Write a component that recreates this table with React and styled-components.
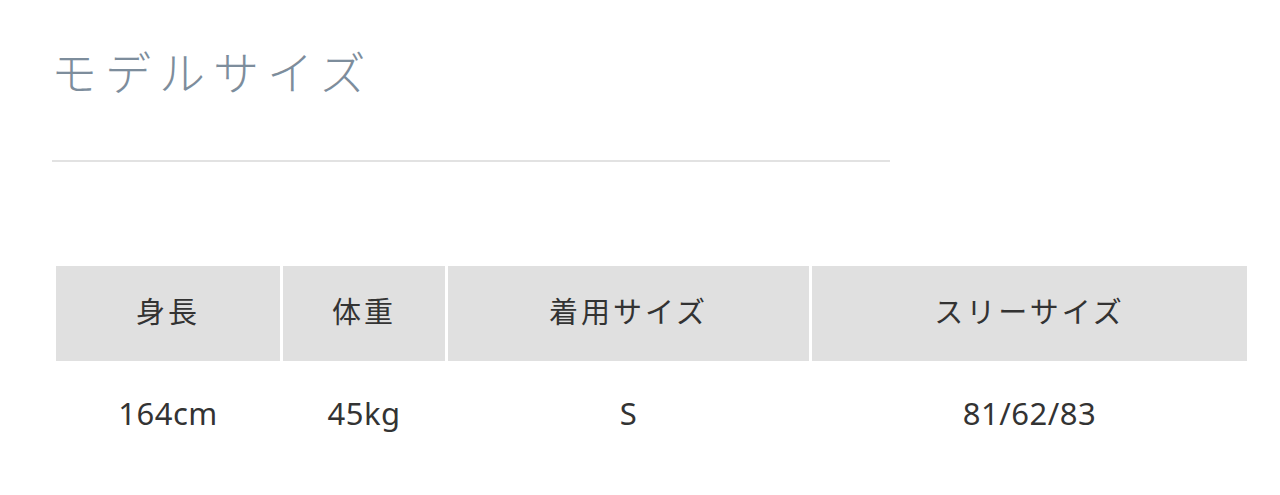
import React from "react";
import styled, { createGlobalStyle } from "styled-components";

const GlobalStyle = createGlobalStyle`
    body {
        margin: 0;
        background: #fff;
        font-family: "Noto Sans CJK JP", "Noto Sans", sans-serif;
    }
`

const headers = ["身長", "体重", "着用サイズ", "スリーサイズ"]
const values = ["164cm", "45kg", "S", "81/62/83"]

const App = () => {
    return (
        <StyledPage>
            <GlobalStyle />
            <StyledTitle>モデルサイズ</StyledTitle>
            <StyledRule />
            <StyledTable>
                {headers.map((h) => (
                    <StyledHead key={h}>{h}</StyledHead>
                ))}
                {values.map((v) => (
                    <StyledCell key={v}>{v}</StyledCell>
                ))}
            </StyledTable>
        </StyledPage>
    )
}

const StyledPage = styled.div `
    padding: 47px 0 0 51px;
    height: 495px;
    box-sizing: border-box;
`

const StyledTitle = styled.h2 `
    margin: 0;
    font-size: 46px;
    line-height: 46px;
    font-weight: 300;
    letter-spacing: 8px;
    color: #7d8d9c;
`

const StyledRule = styled.div `
    width: 838px;
    height: 2px;
    margin: 67px 0 0 1px;
    background: #e2e2e2;
`

const StyledTable = styled.div `
    display: grid;
    grid-template-columns: 224px 162px 361px 435px;
    grid-template-rows: 95px 104px;
    column-gap: 3px;
    margin: 104px 0 0 5px;
`

const StyledHead = styled.div `
    display: flex;
    align-items: center;
    justify-content: center;
    padding-bottom: 8px;
    box-sizing: border-box;
    background: #e0e0e0;
    font-size: 29px;
    font-weight: 400;
    letter-spacing: 3px;
    color: #333;
`

const StyledCell = styled.div `
    display: flex;
    align-items: center;
    justify-content: center;
    font-family: "Noto Sans", sans-serif;
    font-size: 31px;
    letter-spacing: 0.5px;
    color: #333;
`

export default App
